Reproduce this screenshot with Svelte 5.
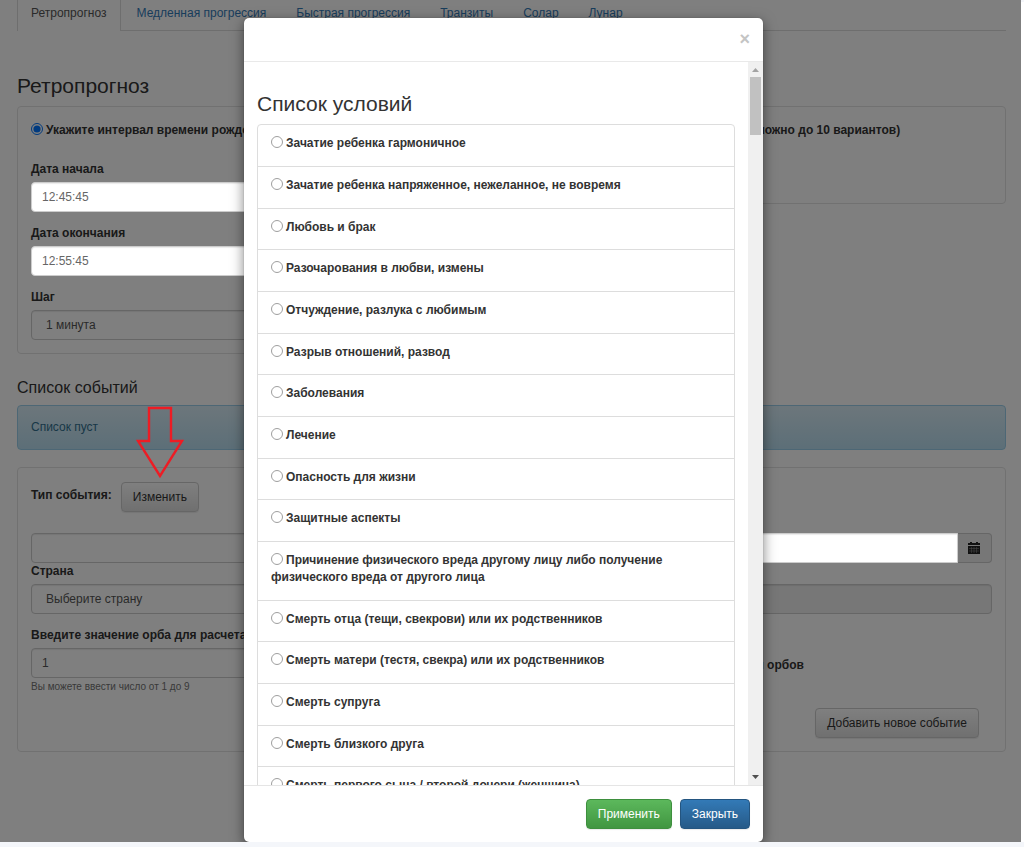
<script lang="ts">
	const tabs = [
		'Ретропрогноз',
		'Медленная прогрессия',
		'Быстрая прогрессия',
		'Транзиты',
		'Солар',
		'Лунар'
	];

	const conditions = [
		'Зачатие ребенка гармоничное',
		'Зачатие ребенка напряженное, нежеланное, не вовремя',
		'Любовь и брак',
		'Разочарования в любви, измены',
		'Отчуждение, разлука с любимым',
		'Разрыв отношений, развод',
		'Заболевания',
		'Лечение',
		'Опасность для жизни',
		'Защитные аспекты',
		'Причинение физического вреда другому лицу либо получение физического вреда от другого лица',
		'Смерть отца (тещи, свекрови) или их родственников',
		'Смерть матери (тестя, свекра) или их родственников',
		'Смерть супруга',
		'Смерть близкого друга',
		'Смерть первого сына / второй дочери (женщина)'
	];

	let mode = $state('interval');
	let start = $state('12:45:45');
	let end = $state('12:55:45');
	let orb = $state('1');
	let selected = $state('');
	let open = $state(true);
</script>

<div class="page">
	<nav class="tabs">
		{#each tabs as tab, i}
			<a href="#tab-{i}" class:active={i === 0}>{tab}</a>
		{/each}
	</nav>

	<h3>Ретропрогноз</h3>
	<div class="row">
		<section class="well">
			<label class="mode">
				<input type="radio" name="mode" value="interval" bind:group={mode} />Укажите интервал времени рождения
			</label>
			<div class="field">
				<label for="start">Дата начала</label>
				<input id="start" class="control raised" type="text" bind:value={start} />
			</div>
			<div class="field">
				<label for="end">Дата окончания</label>
				<input id="end" class="control raised" type="text" bind:value={end} />
			</div>
			<div class="field">
				<label for="step">Шаг</label>
				<select id="step" class="control">
					<option>1 минута</option>
				</select>
			</div>
		</section>
		<section class="well short">
			<label class="mode">
				<input type="radio" name="mode" value="list" bind:group={mode} />Укажите точное время рождения (можно до 10 вариантов)
			</label>
		</section>
	</div>

	<h4>Список событий</h4>
	<div class="alert">Список пуст</div>

	<section class="well event">
		<div class="type">
			<span>Тип события:</span>
			<button class="btn" type="button" onclick={() => (open = true)}>Изменить</button>
		</div>
		<div class="columns">
			<input class="control" type="text" aria-label="Название события" />
			<div class="group">
				<input class="control raised" type="text" aria-label="Дата события" />
				<button class="addon" type="button" aria-label="Календарь">
					<svg width="12" height="12" viewBox="0 0 12 12">
						<path d="M0 1h2V0h2v1h4V0h2v1h2v2H0z" fill="#222" />
						<path d="M0 4h12v8H0z" fill="#222" />
						<path d="M1 6.500h10M1 9h10M3.500 5v6M6 5v6M8.500 5v6" stroke="#999" stroke-width=".5" />
					</svg>
				</button>
			</div>
		</div>
		<div class="columns">
			<div>
				<label for="country">Страна</label>
				<select id="country" class="control">
					<option>Выберите страну</option>
				</select>
			</div>
			<div>
				<label for="city">Город</label>
				<input id="city" class="control" type="text" disabled />
			</div>
		</div>
		<div class="columns orbs">
			<div>
				<label for="orb">Введите значение орба для расчета</label>
				<input id="orb" class="control" type="text" bind:value={orb} />
				<p class="help">Вы можете ввести число от 1 до 9</p>
			</div>
			<label class="check">
				<input type="checkbox" />Использовать стандартные значения орбов
			</label>
		</div>
		<div class="actions">
			<button class="btn" type="button">Добавить новое событие</button>
		</div>
	</section>

	{#if open}
		<div class="backdrop"></div>
		<div class="overlay">
			<div class="modal" role="dialog" aria-modal="true" aria-labelledby="modal-title">
				<header>
					<button class="close" type="button" aria-label="Закрыть окно" onclick={() => (open = false)}>×</button>
				</header>
				<div class="body">
					<div class="scroll">
						<h3 id="modal-title">Список условий</h3>
						<ul>
							{#each conditions as condition}
								<li>
									<label><input type="radio" name="condition" value={condition} bind:group={selected} />{condition}</label>
								</li>
							{/each}
						</ul>
					</div>
					<div class="scrollbar" aria-hidden="true">
						<svg width="7" height="4" viewBox="0 0 7 4"><path d="M0 4L3.500 0L7 4z" fill="#a3a3a3" /></svg>
						<div class="thumb"></div>
						<svg width="7" height="4" viewBox="0 0 7 4"><path d="M0 0L3.500 4L7 0z" fill="#505050" /></svg>
					</div>
				</div>
				<footer>
					<button class="btn success" type="button">Применить</button>
					<button class="btn primary" type="button" onclick={() => (open = false)}>Закрыть</button>
				</footer>
			</div>
		</div>
	{/if}

	<svg class="arrow" width="48" height="72" viewBox="0 0 48 72">
		<path d="M13 2H35V35H46L24 70L2 35H13z" fill="none" stroke="#ed1c24" stroke-width="2.4" />
	</svg>
</div>

<style>
	:global(body) {
		background: #f4f6fa;
	}

	.page {
		position: relative;
		box-sizing: border-box;
		height: calc(100vh - 5px);
		margin-right: 3px;
		padding: 0 15px 0 17px;
		overflow: hidden;
		background: #fff;
		box-shadow: 3px 2px #fff;
		color: #333;
		font: 12px/17px 'Liberation Sans', Arial, sans-serif;
	}

	.page :global(*) {
		box-sizing: border-box;
	}

	input,
	select,
	button {
		margin: 0;
		font: inherit;
	}

	label {
		font-weight: bold;
	}

	input[type='radio'],
	input[type='checkbox'] {
		width: 12px;
		height: 12px;
		margin-right: 3px;
		vertical-align: -1px;
	}

	h3 {
		margin: 0;
		font-size: 21px;
		line-height: 23px;
		font-weight: normal;
	}

	h4 {
		margin: 25px 0 8px;
		font-size: 16px;
		line-height: 18px;
		font-weight: normal;
	}

	.tabs {
		display: flex;
		height: 31px;
		margin-bottom: 43px;
		border-bottom: 1px solid #ddd;
	}

	.tabs a {
		height: 31px;
		padding: 5px 14px 9px;
		margin-right: 2px;
		color: #337ab7;
		text-decoration: none;
	}

	.tabs a.active {
		padding: 5px 13px 9px;
		border: solid #ddd;
		border-width: 0 1px;
		background: #fff;
		color: #555;
	}

	.row {
		display: grid;
		grid-template-columns: 1fr 1fr;
		gap: 26px;
		align-items: start;
		margin-top: 9px;
	}

	.well {
		padding: 13px;
		border: 1px solid #e3e3e3;
		border-radius: 4px;
	}

	.well.short {
		min-height: 98px;
	}

	.mode {
		display: block;
		padding-top: 2px;
		margin-bottom: 22px;
		white-space: nowrap;
	}

	.field + .field {
		margin-top: 13px;
	}

	.field label,
	.columns label {
		display: block;
		margin-bottom: 4px;
	}

	.control {
		display: block;
		width: 100%;
		height: 30px;
		padding: 0 10px;
		border: 1px solid #ccc;
		border-radius: 4px;
		background: #fff;
		box-shadow: inset 0 1px 1px rgba(0, 0, 0, 0.08);
		color: #555;
	}

	select.control {
		padding: 0 14px;
		appearance: none;
	}

	.control:disabled {
		background: #eee;
	}

	.raised {
		position: relative;
		z-index: 2;
		color: #666;
	}

	.alert {
		padding: 13px;
		border: 1px solid #9acfea;
		border-radius: 4px;
		background: linear-gradient(#d9edf7, #b9def0);
		color: #31708f;
	}

	.event {
		margin-top: 17px;
	}

	.type {
		display: flex;
		gap: 9px;
		margin-bottom: 21px;
		padding-top: 1px;
	}

	.type span {
		padding-top: 5px;
		font-weight: bold;
	}

	.btn {
		height: 30px;
		padding: 0 11px;
		border: 1px solid #ccc;
		border-radius: 4px;
		background: linear-gradient(#fff, #e0e0e0);
		color: #333;
		box-shadow: 0 1px 1px rgba(0, 0, 0, 0.08);
		cursor: pointer;
	}

	.columns {
		display: grid;
		grid-template-columns: 1fr 1fr;
		gap: 26px;
	}

	.group {
		display: flex;
	}

	.group .control {
		flex: 1;
		border-radius: 4px 0 0 4px;
	}

	.addon {
		display: grid;
		place-items: center;
		width: 34px;
		height: 30px;
		padding: 0 2px 0 0;
		border: 1px solid #ccc;
		border-left: 0;
		border-radius: 0 4px 4px 0;
		background: #eee;
	}

	.orbs {
		margin-top: 13px;
	}

	.orbs .check {
		padding-top: 30px;
		white-space: nowrap;
	}

	.help {
		margin: 0;
		color: #737373;
		font-size: 10px;
	}

	.actions {
		padding: 13px 13px 0;
		text-align: right;
	}

	.backdrop {
		position: absolute;
		inset: 0;
		z-index: 1;
		background: rgba(0, 0, 0, 0.5);
	}

	.overlay {
		position: absolute;
		inset: 0;
		z-index: 3;
		display: flex;
		justify-content: center;
		padding: 18px 14px 0 0;
	}

	.modal {
		display: flex;
		flex-direction: column;
		width: 100%;
		max-width: 519px;
		border-radius: 5px;
		background: #fff;
		box-shadow: 0 4px 13px rgba(0, 0, 0, 0.5), 0 0 1px rgba(0, 0, 0, 0.4);
	}

	header {
		display: flex;
		justify-content: flex-end;
		padding: 12px 13px 13px;
		border-bottom: 1px solid #e9e9e9;
	}

	.close {
		height: 18px;
		padding: 0;
		border: 0;
		background: none;
		color: #c4c4c4;
		font-size: 18px;
		line-height: 16px;
		font-weight: bold;
		cursor: pointer;
	}

	.body {
		display: flex;
		flex: 1;
		min-height: 0;
	}

	.scroll {
		flex: 1;
		padding: 30px 13px 0;
		overflow-y: auto;
		scrollbar-width: none;
	}

	ul {
		margin: 9px 0 0;
		padding: 0;
		border: 1px solid #ddd;
		border-radius: 4px;
		list-style: none;
	}

	li {
		padding: 10px 13px 14px;
	}

	li + li {
		border-top: 1px solid #ddd;
	}

	li:nth-child(3n) {
		padding-bottom: 13px;
	}

	li input {
		opacity: 0.7;
	}

	.scrollbar {
		display: flex;
		flex-direction: column;
		align-items: center;
		width: 15px;
		padding: 6px 0;
		background: #f0f0f0;
	}

	.thumb {
		width: 11px;
		height: 58px;
		margin: 5px 0 auto;
		background: #c1c1c1;
	}

	footer {
		display: flex;
		justify-content: flex-end;
		gap: 8px;
		padding: 13px;
		border-top: 1px solid #e5e5e5;
	}

	.success {
		border-color: #3e8f3e;
		background: linear-gradient(#5cb85c, #419641);
		color: #fff;
	}

	.primary {
		border-color: #245580;
		background: linear-gradient(#337ab7, #265a88);
		color: #fff;
	}

	.arrow {
		position: absolute;
		top: 406px;
		left: 136px;
		z-index: 4;
		pointer-events: none;
	}
</style>
